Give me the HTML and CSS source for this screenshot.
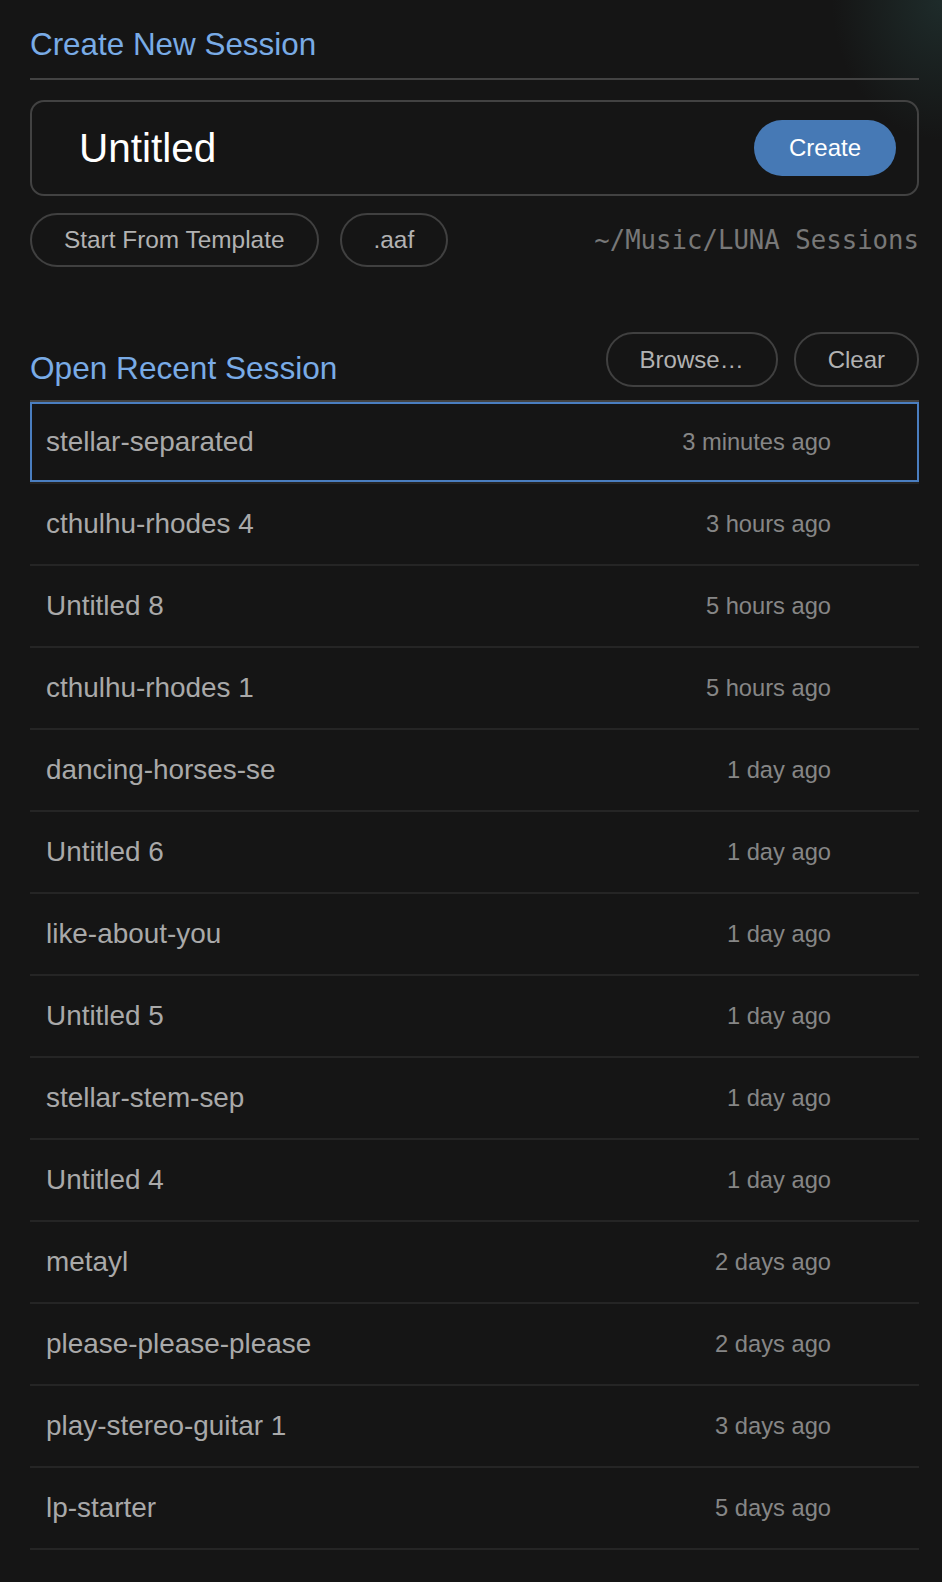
FILE: index.html
```html
<!DOCTYPE html>
<html lang="en">
<head>
<meta charset="utf-8">
<title>Sessions</title>
<link rel="stylesheet" href="styles.css">
</head>
<body>
<div class="page">
  <section class="create">
    <h2 class="section-title">Create New Session</h2>
    <div class="name-box">
      <input class="name-input" type="text" value="Untitled">
      <button class="btn-create">Create</button>
    </div>
    <div class="options">
      <button class="pill">Start From Template</button>
      <button class="pill">.aaf</button>
      <span class="path">~/Music/LUNA Sessions</span>
    </div>
  </section>

  <section class="recent">
    <div class="recent-head">
      <h2 class="section-title plain">Open Recent Session</h2>
      <div class="head-actions">
        <button class="pill tall">Browse…</button>
        <button class="pill tall">Clear</button>
      </div>
    </div>
    <ul class="list">
      <li class="row selected"><span class="name">stellar-separated</span><span class="time">3 minutes ago</span></li>
      <li class="row"><span class="name">cthulhu-rhodes 4</span><span class="time">3 hours ago</span></li>
      <li class="row"><span class="name">Untitled 8</span><span class="time">5 hours ago</span></li>
      <li class="row"><span class="name">cthulhu-rhodes 1</span><span class="time">5 hours ago</span></li>
      <li class="row"><span class="name">dancing-horses-se</span><span class="time">1 day ago</span></li>
      <li class="row"><span class="name">Untitled 6</span><span class="time">1 day ago</span></li>
      <li class="row"><span class="name">like-about-you</span><span class="time">1 day ago</span></li>
      <li class="row"><span class="name">Untitled 5</span><span class="time">1 day ago</span></li>
      <li class="row"><span class="name">stellar-stem-sep</span><span class="time">1 day ago</span></li>
      <li class="row"><span class="name">Untitled 4</span><span class="time">1 day ago</span></li>
      <li class="row"><span class="name">metayl</span><span class="time">2 days ago</span></li>
      <li class="row"><span class="name">please-please-please</span><span class="time">2 days ago</span></li>
      <li class="row"><span class="name">play-stereo-guitar 1</span><span class="time">3 days ago</span></li>
      <li class="row"><span class="name">lp-starter</span><span class="time">5 days ago</span></li>
    </ul>
  </section>
</div>
</body>
</html>
```

FILE: styles.css
```css
* {
  box-sizing: border-box;
}

html, body {
  margin: 0;
  padding: 0;
  background: #151515;
}

body {
  min-height: 1582px;
  font-family: "Liberation Sans", Arial, sans-serif;
  color: #aaaaaa;
  background:
    radial-gradient(ellipse 110px 140px at 100% 0%, rgba(38, 62, 60, 0.55), rgba(21, 21, 21, 0) 100%),
    #151515;
}

.page {
  padding: 27px 23px 0 30px;
}

.section-title {
  margin: 0;
  font-size: 31.4px;
  line-height: 36px;
  font-weight: 400;
  color: #79abe6;
  padding-bottom: 15px;
  border-bottom: 2px solid #434343;
}

.section-title.plain {
  font-size: 31.6px;
  padding-bottom: 0;
  border-bottom: none;
  margin-bottom: 1px;
}

.name-box {
  margin-top: 20px;
  height: 96px;
  display: flex;
  align-items: center;
  padding: 0 21px 0 47px;
  border: 2px solid #424242;
  border-radius: 14px;
}

.name-input {
  flex: 1;
  min-width: 0;
  border: none;
  outline: none;
  background: transparent;
  padding: 0;
  font-family: "Liberation Sans", Arial, sans-serif;
  font-size: 40.5px;
  color: #ffffff;
}

.btn-create {
  height: 56px;
  padding: 0 35px;
  border: none;
  border-radius: 28px;
  background: #4679b5;
  color: #ffffff;
  font-family: "Liberation Sans", Arial, sans-serif;
  font-size: 24px;
}

.options {
  margin-top: 17px;
  display: flex;
  align-items: center;
  gap: 21px;
}

.pill {
  height: 54px;
  padding: 0 32px;
  border: 2px solid #404040;
  border-radius: 27px;
  background: transparent;
  color: #b2b2b2;
  font-family: "Liberation Sans", Arial, sans-serif;
  font-size: 24.4px;
  display: inline-flex;
  align-items: center;
}

.pill.tall {
  height: 55px;
  font-size: 24px;
}

.path {
  margin-left: auto;
  font-family: "DejaVu Sans Mono", "Liberation Mono", monospace;
  font-size: 25.7px;
  color: #787878;
}

.recent {
  margin-top: 65px;
}

.recent-head {
  display: flex;
  justify-content: space-between;
  align-items: flex-end;
  padding-bottom: 13px;
  border-bottom: 2px solid #434343;
}

.head-actions {
  display: flex;
  gap: 16px;
}

.list {
  list-style: none;
  margin: 0;
  padding: 0;
}

.row {
  height: 82px;
  display: flex;
  align-items: center;
  justify-content: space-between;
  padding: 0 88px 0 16px;
  border-bottom: 2px solid #252525;
}

.row.selected {
  box-shadow: inset 0 0 0 2px #4a7ec0;
}

.name {
  font-size: 27.9px;
  color: #a9a9a9;
}

.time {
  font-size: 23.7px;
  color: #868686;
}
```
